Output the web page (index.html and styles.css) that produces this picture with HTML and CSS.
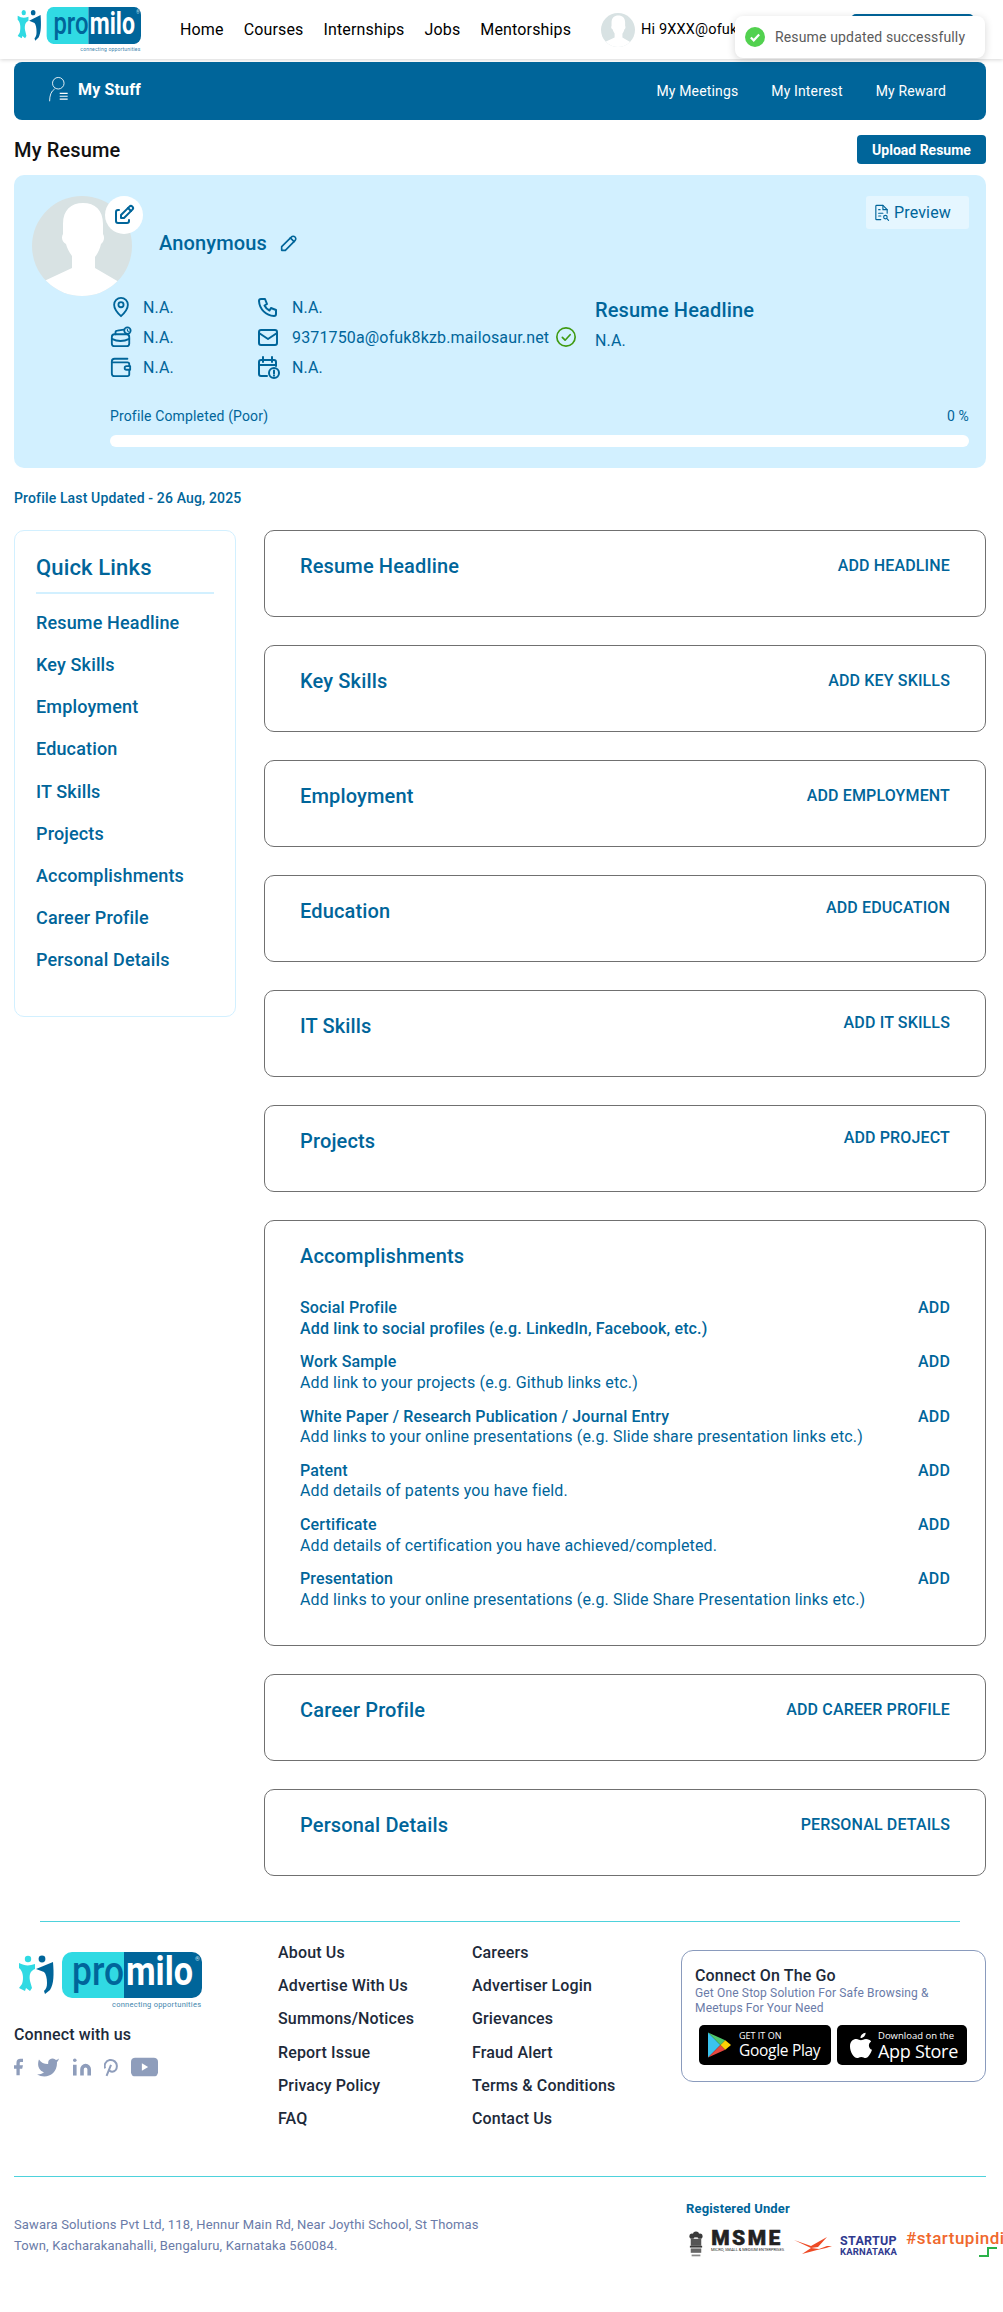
FILE: index.html
```html
<!DOCTYPE html>
<html lang="en">
<head>
    <meta charset="UTF-8">
    <meta name="viewport" content="width=device-width, initial-scale=1.0">
    <title>My Resume - Promilo</title>
    <link rel="stylesheet" href="styles.css">
</head>
<body>
    <svg class="sprite" width="0" height="0">
        <defs>
            <clipPath id="avatar-clip"><circle cx="50" cy="50" r="50"/></clipPath>
        </defs>
        <symbol id="logo" viewBox="0 0 184 56" preserveAspectRatio="none">
            <path fill="#30dae3" d="M54 0h52v46H54a10 10 0 0 1-10-10V10A10 10 0 0 1 54 0z"/>
            <path fill="#00659a" d="M106 0h68a10 10 0 0 1 10 10v26a10 10 0 0 1-10 10h-68z"/>
            <text x="54" y="33" class="logo-pro" textLength="52" lengthAdjust="spacingAndGlyphs">pro</text>
            <text x="108" y="33" class="logo-milo" textLength="67" lengthAdjust="spacingAndGlyphs">milo</text>
            <text x="177" y="9" class="logo-reg">®</text>
            <text x="94" y="55" class="logo-tag" textLength="89">connecting opportunities</text>
            <circle cx="10" cy="7" r="3.200" fill="#30dae3"/>
            <circle cx="24" cy="7" r="3.400" fill="#00659a"/>
            <path fill="#30dae3" d="M1 11c6 3 10 3 16 1v5c-5 2-6 6-5 12l2 7-2 3-4-3-1 3-6-3 3-4c2-6 1-13-3-16z"/>
            <path fill="#00659a" d="M18 17l17-7c1 12 1 22-3 28l-5 4-1-3c2-2 3-4 3-8 0-5-1-9-3-11z"/>
        </symbol>
        <symbol id="avatar" viewBox="0 0 100 100">
            <g clip-path="url(#avatar-clip)">
                <rect width="100" height="100" fill="#d8e2e3"/>
                <path fill="#fff" d="M31 28c0-14 8-21 20-21s20 7 20 21v10c2 3 1 8-2 10-1 5-3 9-6 13v11l24 14v14H10V86l30-14V60c-3-4-5-8-6-12-4-2-5-7-3-10z"/>
            </g>
        </symbol>
    </svg>

    <header class="site-header">
        <a class="header-logo" href="#"><svg class="header-logo-img"><use href="#logo"/></svg></a>
        <nav class="main-nav">
            <a href="#">Home</a>
            <a href="#">Courses</a>
            <a href="#">Internships</a>
            <a href="#">Jobs</a>
            <a href="#">Mentorships</a>
        </nav>
        <svg class="header-avatar"><use href="#avatar"/></svg>
        <div class="header-user">Hi 9XXX@ofuk</div>
        <div class="header-btn"></div>
    </header>

    <div class="toast">
        <svg class="toast-icon" viewBox="0 0 24 24"><circle cx="12" cy="12" r="12" fill="#52d14f"/><path d="M7 12.500l3.500 3.500L17 9" fill="none" stroke="#fff" stroke-width="2.600"/></svg>
        Resume updated successfully
    </div>

    <main class="page">
        <div class="stuff-bar">
            <div class="stuff-title">
                <svg class="stuff-icon" viewBox="0 0 28 36" fill="none" stroke="#fff" stroke-width="1.200">
                    <circle cx="13" cy="10" r="8"/>
                    <path d="M8 18C3 21 1 27 1 35"/>
                    <path d="M15 24h11M15 28h11M15 32h11" stroke-width="1.600"/>
                </svg>
                My Stuff
            </div>
            <nav class="stuff-links">
                <a href="#">My Meetings</a>
                <a href="#">My Interest</a>
                <a href="#">My Reward</a>
            </nav>
        </div>

        <div class="resume-head">
            <h1>My Resume</h1>
            <button class="upload-btn">Upload Resume</button>
        </div>

        <section class="profile-card">
            <div class="profile-top">
                <div class="avatar-wrap">
                    <svg class="avatar-img"><use href="#avatar"/></svg>
                    <span class="avatar-edit">
                        <svg class="icon" viewBox="0 0 24 24"><path d="M7 7H6a2 2 0 0 0-2 2v9a2 2 0 0 0 2 2h9a2 2 0 0 0 2-2v-1"/><path d="M20.400 6.600a2.100 2.100 0 0 0-3-3L9 12v3h3z"/><path d="M16 5l3 3"/></svg>
                    </span>
                </div>
                <div class="profile-name">
                    Anonymous
                    <svg class="icon name-pencil" viewBox="0 0 24 24"><path d="M4 20h4L18.500 9.500a2.830 2.830 0 1 0-4-4L4 16z"/><path d="M13.500 6.500l4 4"/></svg>
                </div>
                <a class="preview-btn" href="#">
                    <svg class="icon preview-icon" viewBox="0 0 24 24"><path d="M11 22H5a1 1 0 0 1-1-1V3a1 1 0 0 1 1-1h9l6 6v5"/><path d="M14 2v6h6"/><path d="M8 8h2M8 13h6M8 17h3"/><circle cx="17.500" cy="18.500" r="2.500"/><path d="M20 21l2 2"/></svg>
                    Preview
                </a>
            </div>

            <div class="profile-details">
                <div class="detail">
                    <svg class="icon" viewBox="0 0 24 24"><path d="M12 2a7.500 7.500 0 0 0-7.500 7.500C4.500 15 12 22 12 22s7.500-7 7.500-12.500A7.500 7.500 0 0 0 12 2z"/><circle cx="12" cy="9.500" r="2.800"/></svg>
                    N.A.
                </div>
                <div class="detail">
                    <svg class="icon icon-wide" viewBox="0 0 24 24"><path d="M5 4h4l2 5-2.500 1.500a11 11 0 0 0 5 5L15 13l5 2v4a2 2 0 0 1-2 2A16 16 0 0 1 3 6a2 2 0 0 1 2-2"/></svg>
                    N.A.
                </div>
                <div class="headline-col">
                    <h3>Resume Headline</h3>
                    <p>N.A.</p>
                </div>
                <div class="detail">
                    <svg class="icon" viewBox="0 0 24 24"><rect x="2" y="9" width="19" height="13" rx="3"/><path d="M2 14c6 3 13 3 19 0"/><path d="M6 9V7c0-1 1-2 2-2l7-1"/><circle cx="19" cy="5" r="3.500"/><path d="M19 3.500V5l1 1" stroke-width="1.200"/></svg>
                    N.A.
                </div>
                <div class="detail">
                    <svg class="icon icon-wide" viewBox="0 0 24 24"><rect x="3" y="5" width="18" height="15" rx="2"/><path d="M3 8l9 6 9-6"/></svg>
                    <span>9371750a@ofuk8kzb.mailosaur.net</span>
                    <svg class="icon icon-ok" viewBox="0 0 24 24"><circle cx="12" cy="12" r="10"/><path d="M8 12.500l3 3 5.500-6"/></svg>
                </div>
                <div class="detail">
                    <svg class="icon" viewBox="0 0 24 24"><path d="M19 3H5a3 3 0 0 0-3 3v13a3 3 0 0 0 3 3h14a2 2 0 0 0 2-2v-4"/><path d="M2 7h17a2 2 0 0 1 2 2v2"/><path d="M22 11h-4a2 2 0 0 0 0 4h4z"/></svg>
                    N.A.
                </div>
                <div class="detail">
                    <svg class="icon icon-wide" viewBox="0 0 24 24"><path d="M11 21H5a2 2 0 0 1-2-2V7a2 2 0 0 1 2-2h13a2 2 0 0 1 2 2v4"/><path d="M7 2v5M16 2v5M3 10h17"/><circle cx="18" cy="18" r="5"/><path d="M18 15.500v3M18 20.500v.2"/></svg>
                    N.A.
                </div>
            </div>

            <div class="progress-labels">
                <span>Profile Completed (Poor)</span>
                <span>0 %</span>
            </div>
            <div class="progress-track"></div>
        </section>

        <p class="last-updated">Profile Last Updated - 26 Aug, 2025</p>

        <div class="resume-layout">
            <aside class="quick-links">
                <h2>Quick Links</h2>
                <a href="#">Resume Headline</a>
                <a href="#">Key Skills</a>
                <a href="#">Employment</a>
                <a href="#">Education</a>
                <a href="#">IT Skills</a>
                <a href="#">Projects</a>
                <a href="#">Accomplishments</a>
                <a href="#">Career Profile</a>
                <a href="#">Personal Details</a>
            </aside>

            <div class="resume-sections">
                <section class="res-card">
                    <h2>Resume Headline</h2>
                    <a class="res-action" href="#">Add Headline</a>
                </section>
                <section class="res-card">
                    <h2>Key Skills</h2>
                    <a class="res-action" href="#">Add Key Skills</a>
                </section>
                <section class="res-card">
                    <h2>Employment</h2>
                    <a class="res-action" href="#">Add Employment</a>
                </section>
                <section class="res-card">
                    <h2>Education</h2>
                    <a class="res-action raised" href="#">Add Education</a>
                </section>
                <section class="res-card">
                    <h2>IT Skills</h2>
                    <a class="res-action raised" href="#">Add IT Skills</a>
                </section>
                <section class="res-card">
                    <h2>Projects</h2>
                    <a class="res-action raised" href="#">Add Project</a>
                </section>

                <section class="res-card accomplishments">
                    <h2>Accomplishments</h2>
                    <div class="acc-row first">
                        <div><h4>Social Profile</h4><p>Add link to social profiles (e.g. LinkedIn, Facebook, etc.)</p></div>
                        <a href="#">ADD</a>
                    </div>
                    <div class="acc-row">
                        <div><h4>Work Sample</h4><p>Add link to your projects (e.g. Github links etc.)</p></div>
                        <a href="#">ADD</a>
                    </div>
                    <div class="acc-row">
                        <div><h4>White Paper / Research Publication / Journal Entry</h4><p>Add links to your online presentations (e.g. Slide share presentation links etc.)</p></div>
                        <a href="#">ADD</a>
                    </div>
                    <div class="acc-row">
                        <div><h4>Patent</h4><p>Add details of patents you have field.</p></div>
                        <a href="#">ADD</a>
                    </div>
                    <div class="acc-row">
                        <div><h4>Certificate</h4><p>Add details of certification you have achieved/completed.</p></div>
                        <a href="#">ADD</a>
                    </div>
                    <div class="acc-row">
                        <div><h4>Presentation</h4><p>Add links to your online presentations (e.g. Slide Share Presentation links etc.)</p></div>
                        <a href="#">ADD</a>
                    </div>
                </section>

                <section class="res-card">
                    <h2>Career Profile</h2>
                    <a class="res-action" href="#">Add Career Profile</a>
                </section>
                <section class="res-card">
                    <h2>Personal Details</h2>
                    <a class="res-action" href="#">Personal Details</a>
                </section>
            </div>
        </div>
    </main>

    <footer class="site-footer">
        <hr class="footer-line short">
        <div class="footer-cols">
            <div class="footer-brand">
                <svg class="footer-logo"><use href="#logo"/></svg>
                <p class="connect-title">Connect with us</p>
                <div class="social">
                    <svg class="soc-f" viewBox="7 2 11 20"><path d="M18 2h-3a5 5 0 0 0-5 5v3H7v4h3v8h4v-8h3l1-4h-4V7a1 1 0 0 1 1-1h3z"/></svg>
                    <svg class="soc-t" viewBox="0 2 24 19"><path d="M23 3a10.900 10.900 0 0 1-3 1.530 4.480 4.480 0 0 0-7.860 3v1A10.660 10.660 0 0 1 3 4s-4 9 5 13a11.640 11.640 0 0 1-7 2c9 5 20 0 20-11.500a4.500 4.500 0 0 0-.08-.83A7.720 7.720 0 0 0 23 3z"/></svg>
                    <svg class="soc-in" viewBox="2 2 20 19"><path d="M16 8a6 6 0 0 1 6 6v7h-4v-7a2 2 0 0 0-4 0v7h-4v-7a6 6 0 0 1 6-6z"/><rect x="2" y="9" width="4" height="12"/><circle cx="4" cy="4" r="2"/></svg>
                    <svg class="soc-p" viewBox="6 4 12 18"><path d="M8 21l4-10M10 15c.5 1.500 1.700 2.200 3 2.200 2.500 0 4.300-2 4.300-5a5.500 5.500 0 1 0-10.600 2" fill="none" stroke="#8e9dbb" stroke-width="1.800"/></svg>
                    <svg class="soc-y" viewBox="0 0 26 18"><rect width="26" height="18" rx="4"/><path d="M10.500 5.500l6 3.500-6 3.500z" fill="#fff"/></svg>
                </div>
            </div>
            <nav class="footer-links col-one">
                <a href="#">About Us</a>
                <a href="#">Advertise With Us</a>
                <a href="#">Summons/Notices</a>
                <a href="#">Report Issue</a>
                <a href="#">Privacy Policy</a>
                <a href="#">FAQ</a>
            </nav>
            <nav class="footer-links col-two">
                <a href="#">Careers</a>
                <a href="#">Advertiser Login</a>
                <a href="#">Grievances</a>
                <a href="#">Fraud Alert</a>
                <a href="#">Terms &amp; Conditions</a>
                <a href="#">Contact Us</a>
            </nav>
            <div class="app-box">
                <h3>Connect On The Go</h3>
                <p>Get One Stop Solution For Safe Browsing &amp; Meetups For Your Need</p>
                <div class="store-row">
                    <a class="store-badge play" href="#">
                        <svg class="play-icon" viewBox="0 0 24 26">
                            <path fill="#3bc3ee" d="M0 0v26l13-13z"/>
                            <path fill="#4fc76b" d="M0 0l13 13 5-5z"/>
                            <path fill="#e8483f" d="M0 26l13-13 5 5z"/>
                            <path fill="#fbd106" d="M18 8l-5 5 5 5 6-5z"/>
                        </svg>
                        <span class="store-text">
                            <small>GET IT ON</small>
                            <b>Google Play</b>
                        </span>
                    </a>
                    <a class="store-badge apple" href="#">
                        <svg class="apple-icon" viewBox="0 0 24 28"><path fill="#fff" d="M17 0c.2 3-2.600 6-5.500 5.800C11.200 3 14 .3 17 0zM23 9.500c-3.500 2.200-3 7.500 1 9.200-1.200 3.500-4 9-7 9-1.700 0-2.500-1.200-4.700-1.200S9.500 27.700 7.800 27.700C4 27.700 0 20.500 0 15 0 9.500 3.500 7 6.800 7c2.200 0 3.800 1.400 5.200 1.400C13.300 8.400 15 7 17.500 7c2.300 0 4.300 1 5.500 2.500z"/></svg>
                        <span class="store-text">
                            <small>Download on the</small>
                            <b>App Store</b>
                        </span>
                    </a>
                </div>
            </div>
        </div>
        <hr class="footer-line">
        <div class="footer-bottom">
            <p class="address">Sawara Solutions Pvt Ltd, 118, Hennur Main Rd, Near Joythi School, St Thomas Town, Kacharakanahalli, Bengaluru, Karnataka 560084.</p>
            <div class="registered">
                <h5>Registered Under</h5>
                <div class="reg-logos">
                    <svg class="emblem" viewBox="0 0 16 31" fill="#3a3a3a">
                        <circle cx="8" cy="4" r="3.500"/><circle cx="3.500" cy="6" r="3"/><circle cx="12.500" cy="6" r="3"/>
                        <rect x="2" y="9" width="12" height="8" fill="#555"/><rect x="1" y="17" width="14" height="2"/>
                        <rect x="2" y="20" width="12" height="5" fill="#666"/><rect x="3" y="27" width="10" height="2" fill="#888"/>
                    </svg>
                    <div class="msme">
                        <strong>MSME</strong>
                        <small>MICRO, SMALL &amp; MEDIUM ENTERPRISES</small>
                    </div>
                    <svg class="startup-wing" viewBox="0 0 38 18" fill="#ee4a25">
                        <path d="M0 3l17 6 16-9-9 10-7 1z"/><path d="M8 17l9-6 8 1 8-3 5 0-6 2-9 2z"/>
                    </svg>
                    <div class="startup-ka"><strong>STARTUP</strong><b>KARNATAKA</b></div>
                    <div class="startup-in">
                        <span>#startupindia</span>
                        <svg class="startup-step" viewBox="0 0 18 10"><path d="M0 9h9V1h9" fill="none" stroke="#2ab24a" stroke-width="2"/></svg>
                    </div>
                </div>
            </div>
        </div>
    </footer>
</body>
</html>
```

FILE: styles.css
```css
/* Common */
html, body {
    overflow-x: hidden;
}

body {
    font-family: Roboto, "Liberation Sans", sans-serif;
    background-color: #fff;
    color: #00659a;
    margin: 0;
    width: 1003px;
    letter-spacing: 0.15px;
}

a {
    color: inherit;
    text-decoration: none;
}

h1, h2, h3, h4, h5, p {
    margin: 0;
}

.sprite {
    position: absolute;
}

symbol {
    overflow: visible;
}

.icon {
    width: 22px;
    height: 22px;
    fill: none;
    stroke: currentColor;
    stroke-width: 2;
    stroke-linecap: round;
    stroke-linejoin: round;
    flex: none;
}

/* Logo */
.logo-pro, .logo-milo {
    font-family: Roboto, sans-serif;
    font-size: 40px;
    font-weight: 500;
    letter-spacing: 0;
}

.logo-pro {
    fill: #00659a;
}

.logo-milo {
    fill: #fff;
    font-weight: 700;
}

.logo-reg {
    fill: #cfe3ee;
    font-size: 6px;
    letter-spacing: 0;
}

.logo-tag {
    fill: #3f86ad;
    font-size: 7.500px;
    letter-spacing: 0;
}

/* Header */
.site-header {
    display: flex;
    align-items: center;
    height: 59px;
    padding-left: 17px;
    background-color: #fff;
    box-shadow: 0 1px 4px rgba(0, 0, 0, 0.16);
    color: #000;
}

.header-logo {
    display: block;
    height: 45px;
    margin-top: 7px;
    margin-right: 39px;
    align-self: flex-start;
}

.header-logo-img {
    display: block;
    width: 124px;
    height: 45px;
    overflow: visible;
}

.main-nav {
    display: flex;
    gap: 20px;
    font-size: 16px;
}

.header-avatar {
    width: 34px;
    height: 34px;
    margin-left: 30px;
    margin-right: 6px;
}

.header-user {
    width: 210px;
    font-size: 14.500px;
    white-space: nowrap;
}

.header-btn {
    width: 123px;
    height: 34px;
    background-color: #00659a;
    border-radius: 5px;
    align-self: flex-start;
    margin-top: 14px;
}

.toast {
    position: absolute;
    top: 16px;
    right: 18px;
    width: 250px;
    height: 42px;
    padding-left: 10px;
    box-sizing: border-box;
    display: flex;
    align-items: center;
    gap: 10px;
    background-color: #fff;
    border-radius: 8px;
    box-shadow: 0 2px 8px rgba(0, 0, 0, 0.16);
    color: #5b5b5b;
    font-size: 14px;
}

.toast-icon {
    width: 20px;
    height: 20px;
}

/* Main */
.page {
    padding: 0 17px 0 14px;
}

.stuff-bar {
    display: flex;
    align-items: center;
    justify-content: space-between;
    height: 58px;
    margin-top: 3px;
    padding: 0 40px 0 32px;
    background-color: #00659a;
    border-radius: 8px;
    color: #fff;
}

.stuff-title {
    display: flex;
    align-items: center;
    gap: 6px;
    font-size: 16px;
    font-weight: 700;
    padding-bottom: 4px;
}

.stuff-icon {
    width: 26px;
    height: 26px;
}

.stuff-links {
    display: flex;
    gap: 33px;
    font-size: 14px;
}

.resume-head {
    display: flex;
    align-items: center;
    justify-content: space-between;
    margin-top: 15px;
    height: 29px;
}

.resume-head h1 {
    font-size: 20px;
    font-weight: 500;
    color: #111;
}

.upload-btn {
    width: 129px;
    height: 29px;
    border: none;
    border-radius: 4px;
    background-color: #00659a;
    color: #fff;
    font-family: inherit;
    font-size: 14px;
    font-weight: 700;
}

/* Profile card */
.profile-card {
    margin-top: 11px;
    padding: 21px 17px 21px 18px;
    background-color: #d2f0ff;
    border-radius: 10px;
}

.profile-top {
    display: flex;
    align-items: center;
}

.avatar-wrap {
    position: relative;
    width: 100px;
    height: 100px;
}

.avatar-img {
    display: block;
    width: 100px;
    height: 100px;
}

.avatar-edit {
    position: absolute;
    top: 0;
    left: 73px;
    width: 38px;
    height: 38px;
    display: flex;
    align-items: center;
    justify-content: center;
    background-color: #fff;
    border-radius: 50%;
}

.avatar-edit .icon {
    width: 24px;
    height: 24px;
}

.profile-name {
    display: flex;
    align-items: center;
    gap: 11px;
    margin-left: 27px;
    padding-bottom: 6px;
    font-size: 20px;
    font-weight: 500;
}

.name-pencil {
    width: 22px;
    height: 22px;
    stroke-width: 1.800;
}

.preview-btn {
    display: flex;
    align-items: center;
    gap: 4px;
    align-self: flex-start;
    box-sizing: border-box;
    width: 103px;
    height: 33px;
    margin-left: auto;
    padding-left: 7px;
    background-color: #e5f6ff;
    border-radius: 3px;
    font-size: 16px;
}

.preview-icon {
    width: 17px;
    height: 17px;
    stroke-width: 1.600;
}

.profile-details {
    display: grid;
    grid-template-columns: 146px 339px 1fr;
    grid-auto-rows: 30px;
    margin: -4px 0 0 78px;
    font-size: 16px;
}

.detail {
    display: flex;
    align-items: center;
    gap: 11px;
    white-space: nowrap;
}

.detail .icon-wide {
    width: 24px;
    height: 24px;
    margin-right: 1px;
}

.detail .icon-ok {
    margin-left: -5px;
    color: #3f9a12;
    stroke-width: 1.800;
}

.headline-col {
    grid-row: 1 / span 2;
    grid-column: 3;
    padding-top: 5px;
}

.headline-col h3 {
    font-size: 20px;
    font-weight: 500;
    line-height: 26px;
}

.headline-col p {
    margin-top: 8px;
    line-height: 20px;
}

.progress-labels {
    display: flex;
    justify-content: space-between;
    margin: 24px 0 0 78px;
    font-size: 14px;
    line-height: 20px;
}

.progress-track {
    height: 12px;
    margin: 9px 0 0 78px;
    background-color: #fff;
    border-radius: 6px;
}

.last-updated {
    margin-top: 20px;
    font-size: 14px;
    font-weight: 500;
    line-height: 20px;
}

/* Sidebar and sections */
.resume-layout {
    display: flex;
    align-items: flex-start;
    gap: 28px;
    margin-top: 22px;
}

.quick-links {
    box-sizing: border-box;
    flex: none;
    width: 222px;
    height: 487px;
    padding: 23px 21px 0;
    border: 1px solid #d2f0ff;
    border-radius: 10px;
}

.quick-links h2 {
    padding-bottom: 10px;
    margin-bottom: 8px;
    border-bottom: 2px solid #d2f0ff;
    font-size: 22px;
    font-weight: 500;
    line-height: 28px;
}

.quick-links a {
    display: block;
    font-size: 18px;
    font-weight: 500;
    line-height: 42.150px;
}

.resume-sections {
    flex: 1;
    display: flex;
    flex-direction: column;
    gap: 28px;
}

.res-card {
    box-sizing: border-box;
    display: flex;
    align-items: flex-start;
    justify-content: space-between;
    min-height: 87px;
    padding: 21px 35px 0;
    border: 1px solid #707070;
    border-radius: 10px;
}

.res-card h2 {
    font-size: 20px;
    font-weight: 500;
    line-height: 28px;
}

.res-action {
    font-size: 16px;
    font-weight: 500;
    line-height: 28px;
    text-transform: uppercase;
}

.res-action.raised {
    margin-top: -3px;
}

.accomplishments {
    display: block;
    height: 426px;
}

.acc-row {
    display: flex;
    justify-content: space-between;
    margin-top: 13.300px;
    font-size: 16px;
    line-height: 20.500px;
}

.acc-row.first {
    margin-top: 28px;
}

.acc-row.first p {
    font-weight: 500;
}

.acc-row h4 {
    font-size: 16px;
    font-weight: 500;
}

.acc-row a {
    font-weight: 500;
}

/* Footer */
.site-footer {
    overflow: hidden;
    padding: 0 17px 0 14px;
    color: #1d2a3a;
}

.footer-line {
    height: 1px;
    margin: 0;
    border: none;
    background-color: #4ed2dc;
}

.footer-line.short {
    margin: 45px 26px 0;
}

.footer-cols {
    display: flex;
    align-items: flex-start;
    height: 212px;
    padding-top: 14px;
    box-sizing: border-box;
    margin-bottom: 42px;
}

.footer-brand {
    width: 264px;
    padding-top: 16px;
}

.footer-logo {
    display: block;
    width: 184px;
    height: 56px;
    margin-left: 4px;
    overflow: visible;
}

.connect-title {
    margin-top: 17px;
    font-size: 16px;
    font-weight: 500;
    line-height: 20px;
}

.social {
    display: flex;
    align-items: center;
    gap: 13px;
    margin-top: 12px;
}

.social svg {
    display: block;
    height: 20px;
    fill: #8e9dbb;
}

.soc-f { width: 9px; }
.soc-t { width: 24px; }
.soc-in { width: 18px; }
.soc-p { width: 14px; }
.soc-y { width: 27px; }

.footer-links {
    display: flex;
    flex-direction: column;
    font-size: 16px;
    font-weight: 500;
    line-height: 33.200px;
}

.col-one {
    width: 194px;
}

.col-two {
    width: 209px;
}

.app-box {
    box-sizing: border-box;
    width: 305px;
    height: 132px;
    margin-top: 14px;
    padding: 15px 13px;
    border: 1px solid #8a9bbd;
    border-radius: 12px;
}

.app-box h3 {
    font-size: 16px;
    font-weight: 500;
    line-height: 20px;
}

.app-box p {
    width: 250px;
    font-size: 12px;
    line-height: 15px;
    color: #6a7ba8;
}

.store-row {
    display: flex;
    gap: 6px;
    margin: 9px 0 0 4px;
}

.store-badge {
    box-sizing: border-box;
    display: flex;
    align-items: center;
    height: 40px;
    background-color: #000;
    border-radius: 5px;
    color: #fff;
}

.store-badge.play {
    width: 132px;
    padding-left: 9px;
    gap: 8px;
}

.store-badge.apple {
    width: 130px;
    padding-left: 13px;
    gap: 6px;
}

.play-icon {
    width: 23px;
    height: 26px;
}

.apple-icon {
    width: 22px;
    height: 27px;
}

.store-text {
    display: flex;
    flex-direction: column;
    font-family: "Open Sans", sans-serif;
    white-space: nowrap;
    letter-spacing: 0;
}

.store-text small {
    font-size: 9px;
    line-height: 11px;
}

.store-text b {
    font-weight: 400;
    font-size: 15.500px;
    line-height: 19px;
    letter-spacing: -0.3px;
}

.apple .store-text small {
    font-size: 9.500px;
}

.apple .store-text b {
    font-size: 18px;
    line-height: 20px;
    letter-spacing: -0.3px;
}

.footer-bottom {
    display: flex;
    width: 1003px;
    box-sizing: border-box;
    padding-top: 22px;
    padding-bottom: 50px;
}

.address {
    width: 480px;
    margin-top: 15px;
    margin-right: 192px;
    font-size: 13px;
    line-height: 21px;
    color: #6a7ba8;
}

.registered {
    flex: none;
    width: 317px;
    overflow: hidden;
}

.registered h5 {
    font-size: 13px;
    font-weight: 700;
    line-height: 20px;
    color: #00659a;
}

.reg-logos {
    display: flex;
    align-items: flex-start;
    margin-top: 10px;
}

.emblem {
    width: 14px;
    height: 31px;
    margin-left: 3px;
    flex: none;
}

.msme {
    width: 72px;
    margin-left: 8px;
    color: #222;
    flex: none;
    text-align: center;
}

.msme strong {
    display: block;
    font-size: 21px;
    font-weight: 900;
    line-height: 18px;
    letter-spacing: 2.500px;
    -webkit-text-stroke: 0.5px #222;
}

.msme small {
    display: block;
    font-size: 4px;
    line-height: 6px;
    white-space: nowrap;
    letter-spacing: 0;
}

.startup-wing {
    width: 38px;
    height: 18px;
    margin: 8px 0 0 11px;
    flex: none;
}

.startup-ka {
    width: 59px;
    margin-left: 8px;
    color: #2f3a8f;
    flex: none;
}

.startup-ka strong {
    display: block;
    font-size: 12.500px;
    font-weight: 700;
    line-height: 13px;
    margin-top: 5px;
    letter-spacing: 0.3px;
}

.startup-ka b {
    display: block;
    font-size: 9.500px;
    line-height: 10px;
    letter-spacing: 0.2px;
}

.startup-in {
    margin-left: 7px;
    flex: none;
}

.startup-in span {
    display: block;
    font-size: 17px;
    line-height: 18px;
    font-weight: 500;
    letter-spacing: 0.5px;
    color: #f0682d;
}

.startup-step {
    display: block;
    width: 18px;
    height: 10px;
    margin-left: 73px;
}
```
